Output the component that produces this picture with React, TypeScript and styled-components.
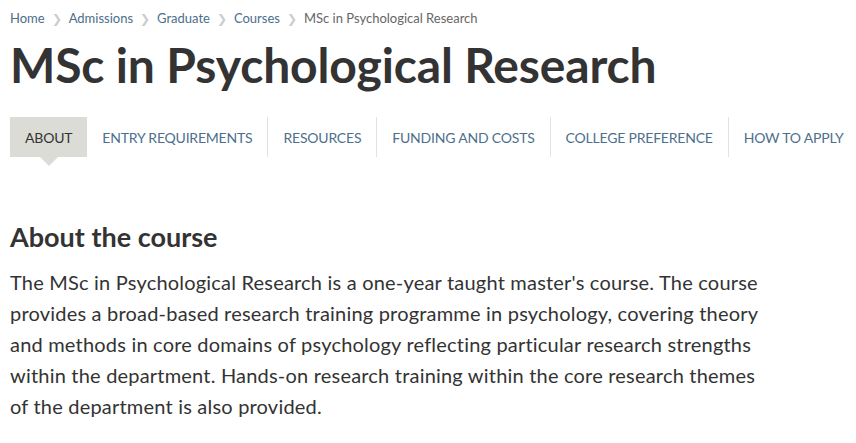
import React from "react";
import styled, { createGlobalStyle } from "styled-components";

const Global = createGlobalStyle`
  html, body { margin: 0; padding: 0; background: #fff; }
  body { font-family: Lato, "Open Sans", sans-serif; color: #333; }
`;

const Page = styled.div`
  padding: 0 10px;
  width: 856px;
  box-sizing: border-box;
`;

const Crumbs = styled.nav`
  display: flex;
  align-items: center;
  height: 36px;
  font-size: 13px;
  gap: 7px;
  white-space: nowrap;
`;

const Crumb = styled.span<{ $current?: boolean }>`
  color: ${(p) => (p.$current ? "#666" : "#4b6e8b")};
`;

const Sep = styled.span`
  color: #ccc;
  font-size: 12px;
`;

const Title = styled.h1`
  margin: 0;
  font-size: 48px;
  font-weight: 700;
  letter-spacing: -0.15px;
  line-height: 58px;
  color: #333;
  white-space: nowrap;
`;

const Tabs = styled.ul`
  list-style: none;
  display: flex;
  margin: 23px 0 0 0;
  padding: 0;
  height: 40px;
  white-space: nowrap;
`;

const Tab = styled.li<{ $active?: boolean; $sep?: boolean }>`
  position: relative;
  display: flex;
  align-items: center;
  padding: 0 15px;
  font-size: 14px;
  letter-spacing: -0.2px;
  text-transform: uppercase;
  color: ${(p) => (p.$active ? "#333" : "#4d6f8c")};
  background: ${(p) => (p.$active ? "#dcdcd6" : "transparent")};
  border-left: ${(p) => (p.$sep ? "1px solid #e2e2e2" : "none")};
  &::after {
    content: "";
    display: ${(p) => (p.$active ? "block" : "none")};
    position: absolute;
    left: 50%;
    bottom: -9px;
    margin-left: -9px;
    border-left: 9px solid transparent;
    border-right: 9px solid transparent;
    border-top: 9px solid #dcdcd6;
  }
`;

const Section = styled.section`
  margin-top: 62px;
`;

const H2 = styled.h2`
  margin: 0;
  font-size: 27px;
  font-weight: 700;
  line-height: 36px;
  color: #333;
`;

const Body = styled.p`
  margin: 12px 0 0 0;
  font-size: 20px;
  letter-spacing: 0.2px;
  line-height: 31px;
  color: #333;
  white-space: nowrap;
`;

const tabs = [
  "About",
  "Entry requirements",
  "Resources",
  "Funding and costs",
  "College preference",
  "How to apply",
];

export default function App() {
  return (
    <Page>
      <Global />
      <Crumbs>
        <Crumb>Home</Crumb>
        <Sep>❯</Sep>
        <Crumb>Admissions</Crumb>
        <Sep>❯</Sep>
        <Crumb>Graduate</Crumb>
        <Sep>❯</Sep>
        <Crumb>Courses</Crumb>
        <Sep>❯</Sep>
        <Crumb $current>MSc in Psychological Research</Crumb>
      </Crumbs>
      <Title>MSc in Psychological Research</Title>
      <Tabs>
        {tabs.map((t, i) => (
          <Tab key={t} $active={i === 0} $sep={i > 1}>
            {t}
          </Tab>
        ))}
      </Tabs>
      <Section>
        <H2>About the course</H2>
        <Body>
          The MSc in Psychological Research is a one-year taught master's course. The course
          <br />
          provides a broad-based research training programme in psychology, covering theory
          <br />
          and methods in core domains of psychology reflecting particular research strengths
          <br />
          within the department. Hands-on research training within the core research themes
          <br />
          of the department is also provided.
        </Body>
      </Section>
    </Page>
  );
}
